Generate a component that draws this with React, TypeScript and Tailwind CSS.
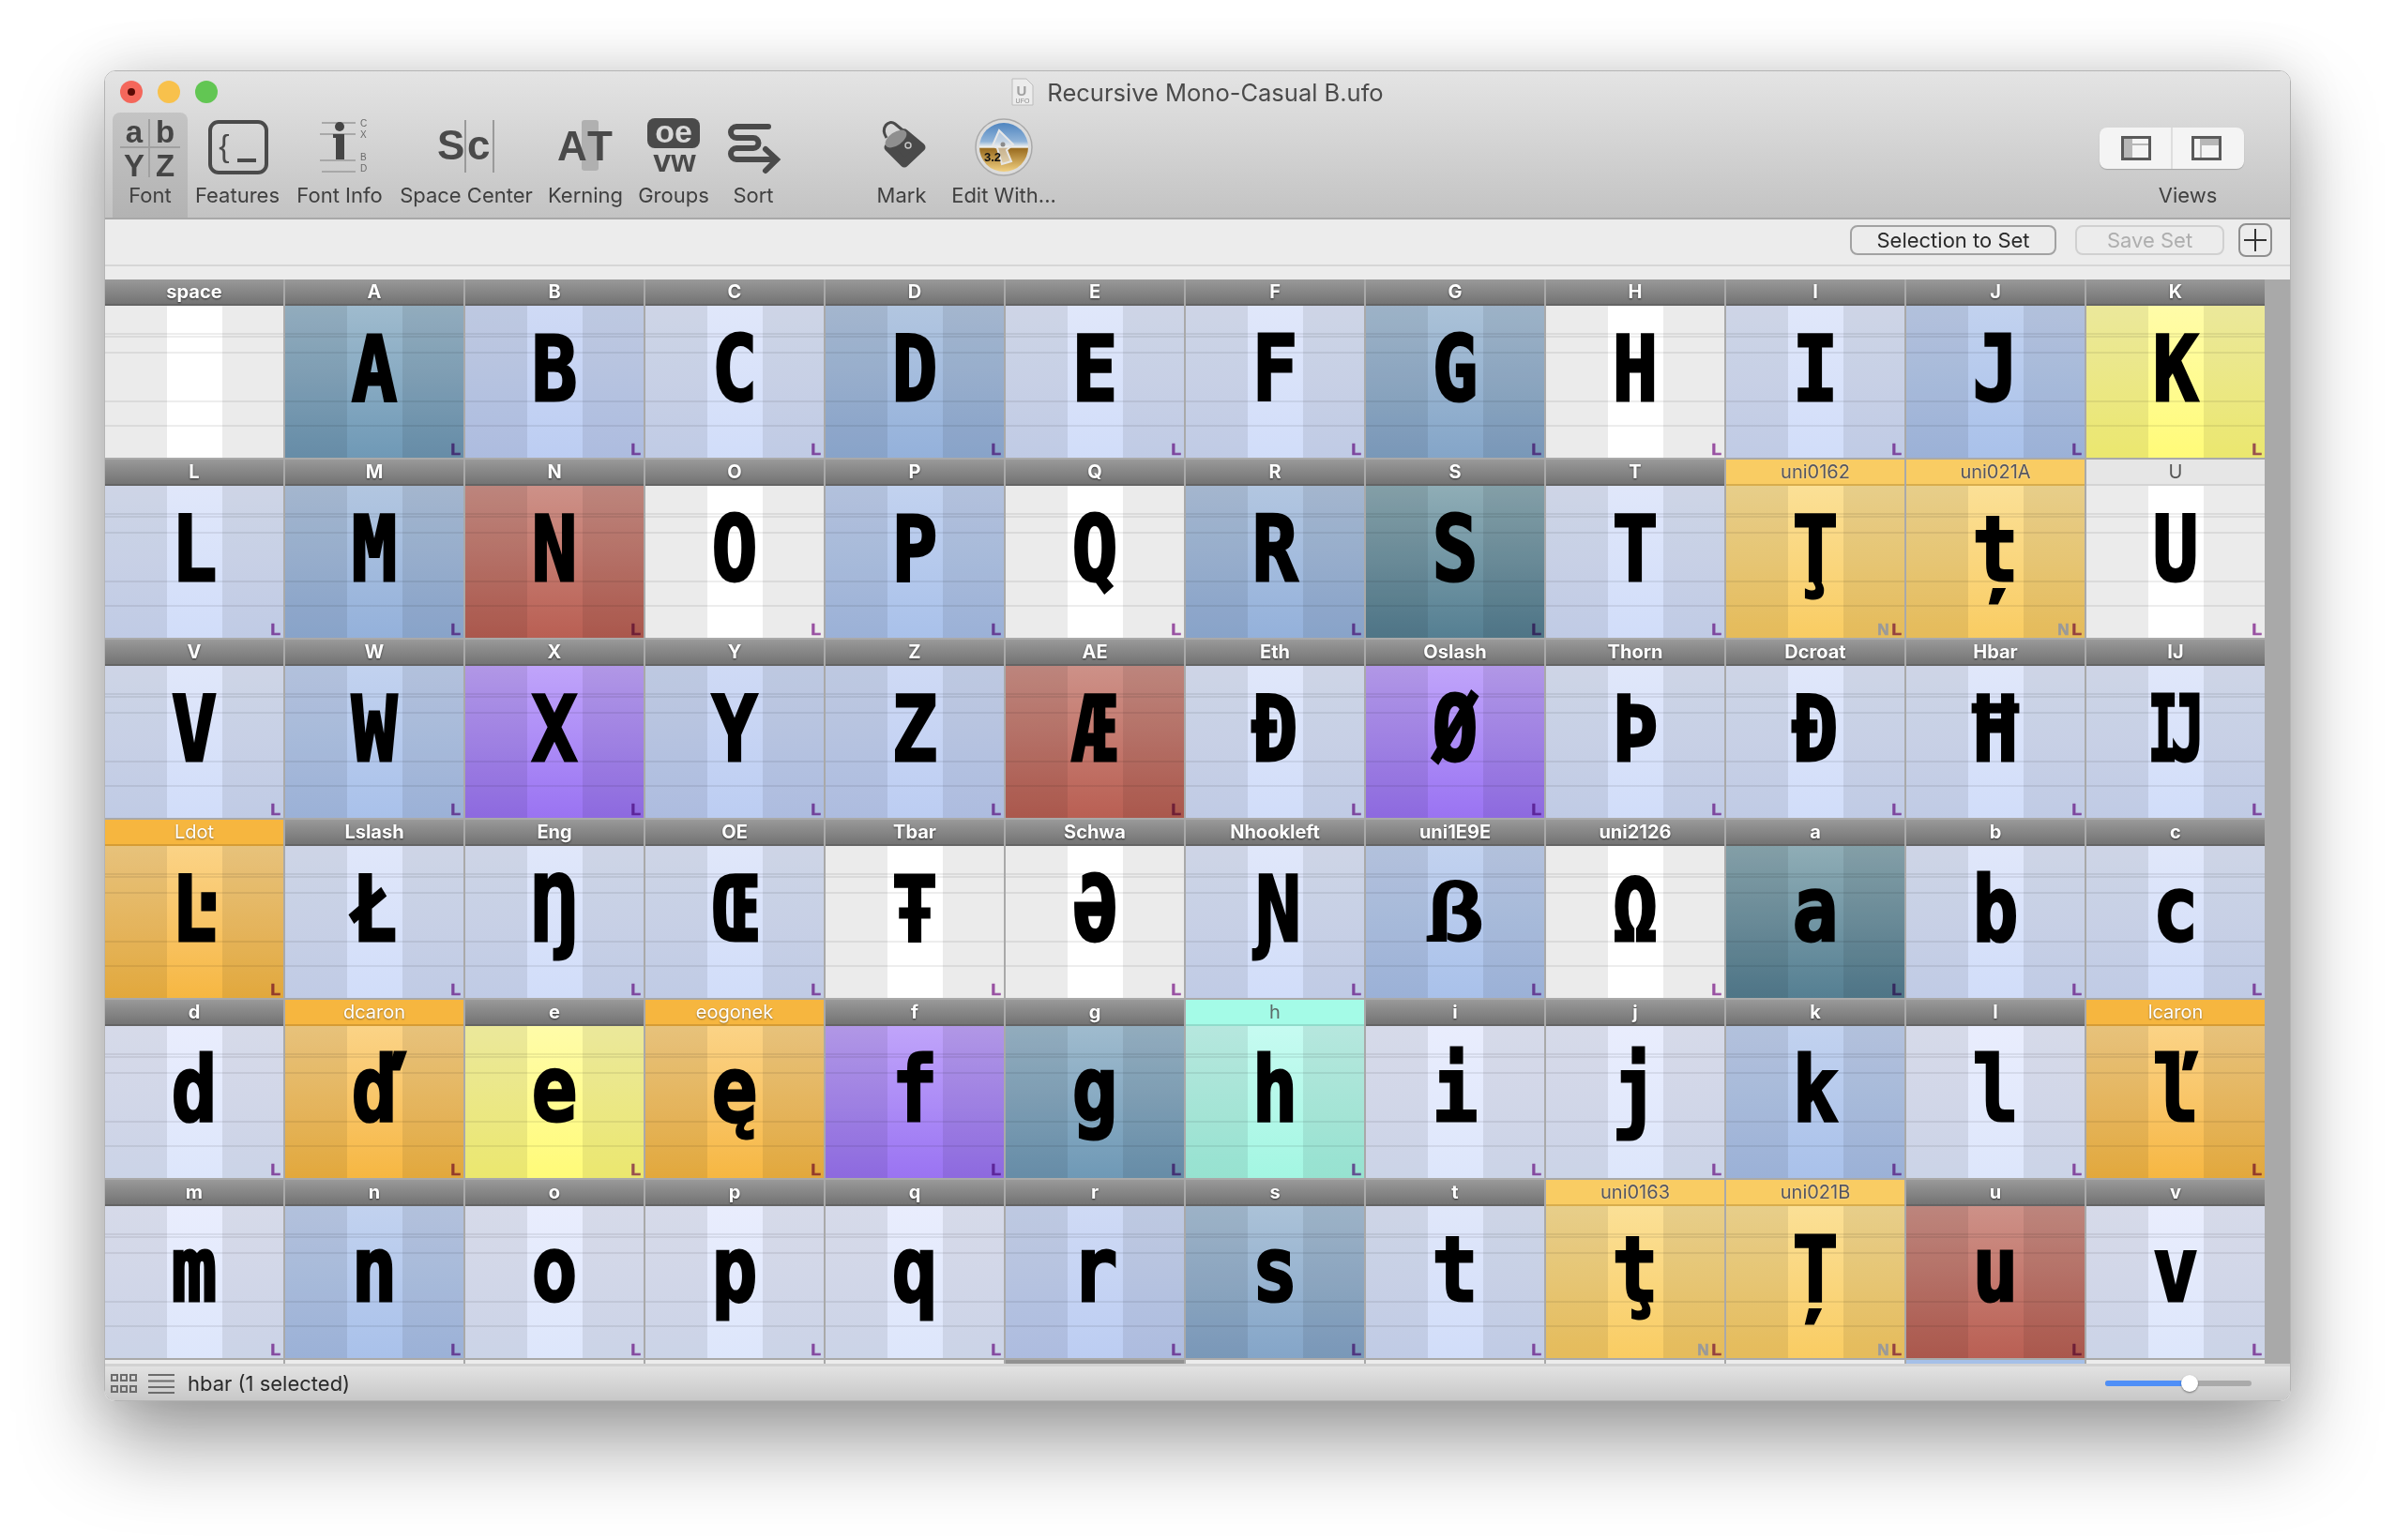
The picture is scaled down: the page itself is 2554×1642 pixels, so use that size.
import { ReactNode } from "react";

type Tone = "white" | "p0" | "p1" | "p2" | "p3" | "m1" | "m2" | "t1" | "t2" | "red" | "purple" | "yellow" | "gold" | "orange" | "mint";
type Head = "dark" | "light" | "gold" | "orange" | "mint";

type Glyph = {
    name: string;
    ch: string;
    tone: Tone;
    head?: Head;
    mark?: string;
};

const toneClass: Record<Tone, string> = {
    white: "bg-white",
    p0: "bg-linear-to-b from-[#e9edfd] to-[#dde6fb]",
    p1: "bg-linear-to-b from-[#e0e7fa] to-[#d1ddf9]",
    p2: "bg-linear-to-b from-[#cfdaf5] to-[#bccdf2]",
    p3: "bg-linear-to-b from-[#c2d2ef] to-[#a9c1ea]",
    m1: "bg-linear-to-b from-[#b2c6e0] to-[#94b1db]",
    m2: "bg-linear-to-b from-[#abc2d8] to-[#84a5c8]",
    t1: "bg-linear-to-b from-[#9fbbce] to-[#6f99b6]",
    t2: "bg-linear-to-b from-[#8fadb6] to-[#557f92]",
    red: "bg-linear-to-b from-[#cd9188] to-[#b95f53]",
    purple: "bg-linear-to-b from-[#c0a4fa] to-[#9a73f2]",
    yellow: "bg-linear-to-b from-[#fffca8] to-[#fffb78]",
    gold: "bg-linear-to-b from-[#fbe096] to-[#f9cc62]",
    orange: "bg-linear-to-b from-[#fbd386] to-[#f6b741]",
    mint: "bg-linear-to-b from-[#c6fbf1] to-[#a3f6e2]",
};

const headClass: Record<Head, string> = {
    dark: "bg-linear-to-b from-[#999999] to-[#747474] border-[#646464] text-white font-bold [text-shadow:0_1px_2px_rgba(0,0,0,0.65)]",
    light: "bg-[#e6e6e6] border-[#d4d4d4] text-[#555555]",
    gold: "bg-[#f9cc63] border-[#d8ad4c] text-[#55555f] [text-shadow:0_0_2px_rgba(255,255,255,0.6)]",
    orange: "bg-[#f6b63f] border-[#d69c34] text-white [text-shadow:0_1px_2px_rgba(0,0,0,0.45)]",
    mint: "bg-[#a4fbe7] border-[#8fdccb] text-[#5c6a68]",
};

const glyphs: Glyph[] = [
    { name: "space", ch: "", tone: "white", mark: "" },
    { name: "A", ch: "A", tone: "t1" },
    { name: "B", ch: "B", tone: "p2" },
    { name: "C", ch: "C", tone: "p1" },
    { name: "D", ch: "D", tone: "m1" },
    { name: "E", ch: "E", tone: "p1" },
    { name: "F", ch: "F", tone: "p1" },
    { name: "G", ch: "G", tone: "m2" },
    { name: "H", ch: "H", tone: "white" },
    { name: "I", ch: "I", tone: "p1" },
    { name: "J", ch: "J", tone: "p3" },
    { name: "K", ch: "K", tone: "yellow" },

    { name: "L", ch: "L", tone: "p1" },
    { name: "M", ch: "M", tone: "m1" },
    { name: "N", ch: "N", tone: "red" },
    { name: "O", ch: "O", tone: "white" },
    { name: "P", ch: "P", tone: "p3" },
    { name: "Q", ch: "Q", tone: "white" },
    { name: "R", ch: "R", tone: "m1" },
    { name: "S", ch: "S", tone: "t2" },
    { name: "T", ch: "T", tone: "p1" },
    { name: "uni0162", ch: "Ţ", tone: "gold", head: "gold", mark: "NL" },
    { name: "uni021A", ch: "ț", tone: "gold", head: "gold", mark: "NL" },
    { name: "U", ch: "U", tone: "white", head: "light" },

    { name: "V", ch: "V", tone: "p1" },
    { name: "W", ch: "W", tone: "p3" },
    { name: "X", ch: "X", tone: "purple" },
    { name: "Y", ch: "Y", tone: "p2" },
    { name: "Z", ch: "Z", tone: "p2" },
    { name: "AE", ch: "Æ", tone: "red" },
    { name: "Eth", ch: "Ð", tone: "p1" },
    { name: "Oslash", ch: "Ø", tone: "purple" },
    { name: "Thorn", ch: "Þ", tone: "p1" },
    { name: "Dcroat", ch: "Đ", tone: "p1" },
    { name: "Hbar", ch: "Ħ", tone: "p1" },
    { name: "IJ", ch: "Ĳ", tone: "p1" },

    { name: "Ldot", ch: "Ŀ", tone: "orange", head: "orange" },
    { name: "Lslash", ch: "Ł", tone: "p1" },
    { name: "Eng", ch: "Ŋ", tone: "p1" },
    { name: "OE", ch: "Œ", tone: "p1" },
    { name: "Tbar", ch: "Ŧ", tone: "white" },
    { name: "Schwa", ch: "Ə", tone: "white" },
    { name: "Nhookleft", ch: "Ɲ", tone: "p1" },
    { name: "uni1E9E", ch: "ẞ", tone: "p3" },
    { name: "uni2126", ch: "Ω", tone: "white" },
    { name: "a", ch: "a", tone: "t2" },
    { name: "b", ch: "b", tone: "p1" },
    { name: "c", ch: "c", tone: "p1" },

    { name: "d", ch: "d", tone: "p0" },
    { name: "dcaron", ch: "ď", tone: "orange", head: "orange" },
    { name: "e", ch: "e", tone: "yellow" },
    { name: "eogonek", ch: "ę", tone: "orange", head: "orange" },
    { name: "f", ch: "f", tone: "purple" },
    { name: "g", ch: "g", tone: "t1" },
    { name: "h", ch: "h", tone: "mint", head: "mint" },
    { name: "i", ch: "i", tone: "p0" },
    { name: "j", ch: "j", tone: "p0" },
    { name: "k", ch: "k", tone: "p3" },
    { name: "l", ch: "l", tone: "p0" },
    { name: "lcaron", ch: "ľ", tone: "orange", head: "orange" },

    { name: "m", ch: "m", tone: "p0" },
    { name: "n", ch: "n", tone: "p3" },
    { name: "o", ch: "o", tone: "p0" },
    { name: "p", ch: "p", tone: "p0" },
    { name: "q", ch: "q", tone: "p0" },
    { name: "r", ch: "r", tone: "p2" },
    { name: "s", ch: "s", tone: "m2" },
    { name: "t", ch: "t", tone: "p1" },
    { name: "uni0163", ch: "ţ", tone: "gold", head: "gold", mark: "NL" },
    { name: "uni021B", ch: "Ț", tone: "gold", head: "gold", mark: "NL" },
    { name: "u", ch: "u", tone: "red" },
    { name: "v", ch: "v", tone: "p0" },
];

// next row, only the top few pixels are scrolled into view
const nextRowClass = [
    "bg-[#ececec]", "bg-[#ececec]", "bg-[#ececec]", "bg-[#ececec]", "bg-[#ececec]", "bg-[#919191]",
    "bg-[#ececec]", "bg-[#ececec]", "bg-[#ececec]", "bg-[#ececec]", "bg-[#a5c0e8]", "bg-[#ececec]",
];

const guideLines = ["top-[29px]", "top-[32px]", "top-[49px]", "top-[101px]", "top-[127px]"];

const GlyphCell = ({ glyph }: { glyph: Glyph }) => {
    const mark = glyph.mark ?? "L";

    return (
        <div className="border-r-2 border-b-2 border-[#a9a9a9] h-[192px]">
            <div className={`h-[28px] border-b-2 text-center text-[20px] leading-[27px] ${headClass[glyph.head ?? "dark"]}`}>
                {glyph.name}
            </div>
            <div className={`relative h-[162px] overflow-hidden ${toneClass[glyph.tone]}`}>
                <div className="absolute inset-0 flex">
                    <div className="w-[66px] bg-black/[0.08]" />
                    <div className="w-[59px]" />
                    <div className="grow bg-black/[0.08]" />
                </div>
                {guideLines.map((top) => (
                    <div key={top} className={`absolute inset-x-0 h-[2px] bg-black/[0.07] ${top}`} />
                ))}
                <div className="relative h-[136px] text-center text-[96px] leading-[136px] text-black font-bold font-['DejaVu_Sans_Mono',monospace] scale-x-[0.84] [-webkit-text-stroke:3px_black]">
                    {glyph.ch}
                </div>
                <div className="absolute right-[3px] bottom-[2px] flex gap-[3px] text-[17px] leading-[12px] font-bold font-['Liberation_Sans',sans-serif]">
                    {mark.split("").map((m) => (
                        <span key={m} className={m === "N" ? "text-[#9a9a9a] [-webkit-text-stroke:0.6px_#9a9a9a]" : "text-[#a658b0] [-webkit-text-stroke:0.6px_#a658b0] mix-blend-multiply"}>{m}</span>
                    ))}
                </div>
            </div>
        </div>
    );
};

const ToolItem = ({ label, width, selected, children }: { label: string; width: string; selected?: boolean; children: ReactNode }) => (
    <div className={`flex flex-col items-center h-[112px] shrink-0 ${width} ${selected ? "rounded-t-lg bg-linear-to-b from-[#c4c4c4] to-[#b3b3b3]" : ""}`}>
        <div className="h-[76px] w-full">{children}</div>
        <span className="text-[22px] leading-[24px] text-[#404040] whitespace-nowrap">{label}</span>
    </div>
);

const svgFont = "font-['Liberation_Sans',sans-serif] font-bold";

const FontIcon = () => (
    <svg viewBox="120 120 80 76" className="w-full h-full">
        <path d="M159 127V189M128 157H192" stroke="#a0a0a0" strokeWidth="2" />
        <g fill="#454545" fontSize="33" textAnchor="middle" className={svgFont}>
            <text x="143" y="152">a</text>
            <text x="176" y="152">b</text>
            <text x="143" y="188">Y</text>
            <text x="176" y="188">Z</text>
        </g>
    </svg>
);

const FeaturesIcon = () => (
    <svg viewBox="200 120 106 76" className="w-full h-full">
        <rect x="224" y="130" width="60" height="54" rx="9" fill="none" stroke="#4a4a4a" strokeWidth="4" />
        <text x="239" y="167" fontSize="34" textAnchor="middle" fill="#4a4a4a" className="font-['Liberation_Sans',sans-serif]">{"{"}</text>
        <rect x="253" y="169" width="20" height="4" fill="#4a4a4a" />
    </svg>
);

const FontInfoIcon = () => (
    <svg viewBox="306 120 112 76" className="w-full h-full">
        <path d="M343 131H379M341 143H379M341 171H379M343 183H379" stroke="#a8a8a8" strokeWidth="2" />
        <circle cx="362" cy="135" r="5" fill="#454545" />
        <path d="M355 143H367V170H358V147H355Z" fill="#454545" />
        <g fontSize="10" fill="#6a6a6a" className="font-['Liberation_Sans',sans-serif]">
            <text x="384" y="135">C</text>
            <text x="384" y="147">X</text>
            <text x="384" y="171">B</text>
            <text x="384" y="183">D</text>
        </g>
    </svg>
);

const SpaceCenterIcon = () => (
    <svg viewBox="418 120 158 76" className="w-full h-full">
        <g fill="#4a4a4a" fontSize="44" className={svgFont}>
            <text x="466" y="170">S</text>
            <text x="498" y="170">c</text>
        </g>
        <path d="M496 128V184M526 128V184" stroke="#9a9a9a" strokeWidth="2" />
    </svg>
);

const KerningIcon = () => (
    <svg viewBox="576 120 96 76" className="w-full h-full">
        <rect x="620" y="128" width="18" height="54" rx="3" fill="#b0b0b0" />
        <g fill="#4a4a4a" fontSize="44" className={svgFont}>
            <text x="594" y="171">A</text>
            <text x="626" y="171">T</text>
        </g>
    </svg>
);

const GroupsIcon = () => (
    <svg viewBox="672 120 92 76" className="w-full h-full">
        <rect x="690" y="126" width="56" height="32" rx="8" fill="#4a4a4a" />
        <g fontSize="34" textAnchor="middle" className={svgFont}>
            <text x="718" y="152" fill="#d8d8d8">oe</text>
            <text x="719" y="183" fill="#4a4a4a">vw</text>
        </g>
    </svg>
);

const SortIcon = () => (
    <svg viewBox="764 120 78 76" className="w-full h-full">
        <path
            d="M819 135H785A6 6 0 0 0 785 147H803A5.5 5.5 0 0 1 803 158H785A6 6 0 0 0 785 170H826M816 159L828 170L816 182"
            fill="none"
            stroke="#4a4a4a"
            strokeWidth="6"
            strokeLinecap="round"
            strokeLinejoin="miter"
        />
    </svg>
);

const MarkIcon = () => (
    <svg viewBox="918 120 86 76" className="w-full h-full">
        <path d="M945 147C938 136 947 127 954 132L966 142" fill="none" stroke="#4a4a4a" strokeWidth="3" />
        <path d="M947 157L964 174L982 157L964 142Z" fill="#4a4a4a" stroke="#4a4a4a" strokeWidth="9" strokeLinejoin="round" />
        <ellipse cx="955" cy="148" rx="13" ry="7" transform="rotate(-35 955 148)" fill="#8f8f8f" />
        <circle cx="968" cy="155" r="3" fill="none" stroke="#c9c9c9" strokeWidth="1.5" />
    </svg>
);

const EditWithIcon = () => (
    <svg viewBox="1004 120 132 76" className="w-full h-full">
        <defs>
            <linearGradient id="sky" x1="0" y1="0" x2="0" y2="1">
                <stop offset="0" stopColor="#4f85c0" />
                <stop offset="0.38" stopColor="#8fb3d8" />
                <stop offset="0.5" stopColor="#f4f4f0" />
                <stop offset="0.53" stopColor="#9a6c20" />
                <stop offset="1" stopColor="#f0cf80" />
            </linearGradient>
        </defs>
        <circle cx="1070" cy="157" r="30" fill="#dcdcdc" stroke="#a9a9a9" strokeWidth="1.5" />
        <circle cx="1070" cy="157" r="26" fill="url(#sky)" />
        <path d="M1065 139L1080 154L1073 160L1078 172L1068 175L1063 158L1058 155Z" fill="#ececec" fillOpacity="0.55" stroke="#e6e6e6" strokeWidth="2" />
        <circle cx="1069" cy="154" r="2.5" fill="#8a8a8a" />
        <text x="1058" y="172" fontSize="13" textAnchor="middle" fill="#111111" className={svgFont}>3.2</text>
    </svg>
);

const UfoFileIcon = () => (
    <svg width="24" height="30" viewBox="0 0 24 30">
        <path d="M1 1H16L23 8V29H1Z" fill="#ececec" stroke="#bcbcbc" />
        <text x="11" y="19" fontSize="15" textAnchor="middle" fill="#a0a0a0" className={svgFont}>U</text>
        <text x="12" y="27" fontSize="7" textAnchor="middle" fill="#8a8a8a" className="font-['Liberation_Sans',sans-serif]">UFO</text>
    </svg>
);

const ViewsControl = () => (
    <div className="flex w-[154px] h-[44px] mt-[16px] rounded-lg bg-[#f4f4f4] shadow-[0_1px_1px_rgba(0,0,0,0.2)] divide-x-2 divide-[#dedede]">
        <div className="flex-1 grid place-items-center pl-[2px]">
            <svg width="32" height="26" viewBox="0 0 32 26">
                <rect x="2" y="2" width="10" height="22" fill="#b7b7b7" />
                <path d="M12 9H30" stroke="#b7b7b7" strokeWidth="2" />
                <rect x="1.5" y="1.5" width="29" height="23" fill="none" stroke="#5a5a5a" strokeWidth="3" />
            </svg>
        </div>
        <div className="flex-1 grid place-items-center pr-[3px]">
            <svg width="32" height="26" viewBox="0 0 32 26">
                <rect x="10" y="2" width="20" height="8" fill="#b7b7b7" />
                <path d="M10 2V24" stroke="#b7b7b7" strokeWidth="2" />
                <rect x="1.5" y="1.5" width="29" height="23" fill="none" stroke="#5a5a5a" strokeWidth="3" />
            </svg>
        </div>
    </div>
);

const App = () => {
    return (
        <div className="w-[2554px] h-[1642px] overflow-hidden bg-white pl-[111px] pt-[75px] font-['Inter','Liberation_Sans',sans-serif]">
            <div className="flex flex-col w-[2331px] h-[1419px] rounded-[12px] overflow-hidden border border-[#b4b4b4] shadow-[0_44px_90px_rgba(0,0,0,0.38),0_0_60px_rgba(0,0,0,0.12)]">

                <div className="bg-linear-to-b from-[#e4e4e4] to-[#c3c3c3]">
                    <div className="grid grid-cols-[1fr_auto_1fr] items-center h-[44px]">
                        <div className="flex gap-[16px] pl-[16px]">
                            <div className="w-[24px] h-[24px] rounded-full bg-[#f4675b] grid place-items-center">
                                <div className="w-[8px] h-[8px] rounded-full bg-[#5a0b06]" />
                            </div>
                            <div className="w-[24px] h-[24px] rounded-full bg-[#f8c14c]" />
                            <div className="w-[24px] h-[24px] rounded-full bg-[#62c653]" />
                        </div>
                        <div className="flex items-center gap-[14px]">
                            <UfoFileIcon />
                            <span className="mt-[2px] text-[25.5px] leading-[30px] text-[#4a4a4a]">Recursive Mono-Casual B.ufo</span>
                        </div>
                        <div />
                    </div>

                    <div className="flex h-[112px] pl-[8px] pr-[49px]">
                        <ToolItem label="Font" width="w-[80px]" selected><FontIcon /></ToolItem>
                        <ToolItem label="Features" width="w-[106px]"><FeaturesIcon /></ToolItem>
                        <ToolItem label="Font Info" width="w-[112px]"><FontInfoIcon /></ToolItem>
                        <ToolItem label="Space Center" width="w-[158px]"><SpaceCenterIcon /></ToolItem>
                        <ToolItem label="Kerning" width="w-[96px]"><KerningIcon /></ToolItem>
                        <ToolItem label="Groups" width="w-[92px]"><GroupsIcon /></ToolItem>
                        <ToolItem label="Sort" width="w-[78px]"><SortIcon /></ToolItem>
                        <div className="w-[76px] shrink-0" />
                        <ToolItem label="Mark" width="w-[86px]"><MarkIcon /></ToolItem>
                        <ToolItem label="Edit With..." width="w-[132px]"><EditWithIcon /></ToolItem>

                        <div className="ml-auto flex flex-col items-center w-[154px]">
                            <div className="h-[76px]"><ViewsControl /></div>
                            <span className="pl-[34px] text-[22px] leading-[24px] text-[#404040]">Views</span>
                        </div>
                    </div>
                </div>

                <div className="bg-[#ececec] border-t-2 border-[#a8a8a8]">
                    <div className="flex items-center justify-end h-[48px] pb-[4px] pr-[19px] border-b-0">
                        <button className="h-[32px] w-[220px] rounded-lg border-2 border-[#a2a2a2] text-[22px] leading-[26px] text-[#2a2a2a]">Selection to Set</button>
                        <button className="h-[32px] w-[159px] ml-[20px] rounded-lg border-2 border-[#d0d0d0] text-[22px] leading-[26px] text-[#aeaeae]">Save Set</button>
                        <button className="w-[36px] h-[36px] ml-[15px] rounded-lg border-2 border-[#8f8f8f] grid place-items-center">
                            <svg width="24" height="24" viewBox="0 0 24 24">
                                <path d="M12 0V24M0 12H24" stroke="#333333" strokeWidth="2" />
                            </svg>
                        </button>
                    </div>
                    <div className="h-[2px] bg-[#d6d6d6]" />
                    <div className="h-[14px]" />
                </div>

                <div className="flex h-[1156px] overflow-hidden">
                    <div className="grid grid-cols-[repeat(12,192px)] w-[2304px] shrink-0">
                        {glyphs.map((g) => (
                            <GlyphCell key={g.name} glyph={g} />
                        ))}
                        {nextRowClass.map((cls, i) => (
                            <div key={i} className={`h-[4px] border-r-2 border-[#a9a9a9] ${cls}`} />
                        ))}
                    </div>
                    <div className="grow bg-[#a9a9a9]" />
                </div>

                <div className="flex items-center h-[39px] pl-[6px] pr-[41px] border-t-[3px] border-[#d2d2d2] bg-linear-to-b from-[#e2e2e2] to-[#c8c8c8]">
                    <svg width="28" height="20" viewBox="0 0 28 20">
                        <g fill="none" stroke="#6c6c6c" strokeWidth="2">
                            <rect x="1" y="1" width="6" height="6" />
                            <rect x="11" y="1" width="6" height="6" />
                            <rect x="21" y="1" width="6" height="6" />
                            <rect x="1" y="13" width="6" height="6" />
                            <rect x="11" y="13" width="6" height="6" />
                            <rect x="21" y="13" width="6" height="6" />
                        </g>
                    </svg>
                    <svg width="28" height="21" viewBox="0 0 28 21" className="ml-[12px]">
                        <path d="M0 1H28M0 7.5H28M0 14H28M0 20H28" stroke="#6c6c6c" strokeWidth="2" />
                    </svg>
                    <span className="ml-[14px] text-[22px] leading-[26px] text-[#2a2a2a]">hbar (1 selected)</span>

                    <div className="relative ml-auto w-[156px] h-[6px] rounded-full bg-[#aaaaaa]">
                        <div className="w-[90px] h-full rounded-full bg-[#4f8ff7]" />
                        <div className="absolute left-[81px] top-[-6px] w-[18px] h-[18px] rounded-full bg-white shadow-[0_1px_2px_rgba(0,0,0,0.45)]" />
                    </div>
                </div>
            </div>
        </div>
    );
};

export default App;
